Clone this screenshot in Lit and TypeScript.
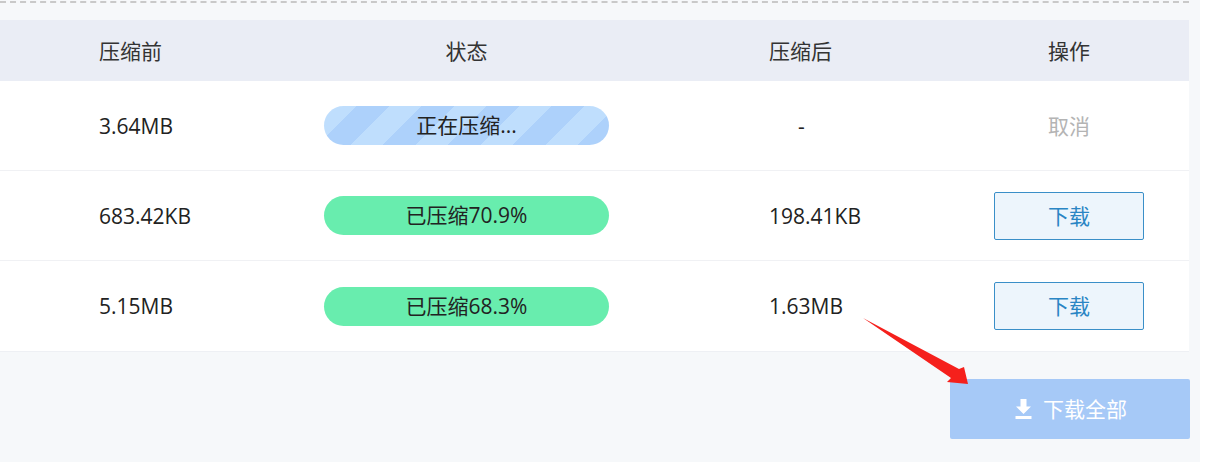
import { LitElement, html, css } from "lit";
import { customElement } from "lit/decorators.js";

const rows = [
  { before: "3.64MB", status: "正在压缩...", busy: true, after: "-", action: "cancel" },
  { before: "683.42KB", status: "已压缩70.9%", busy: false, after: "198.41KB", action: "download" },
  { before: "5.15MB", status: "已压缩68.3%", busy: false, after: "1.63MB", action: "download" },
];

@customElement("app-root")
export class AppRoot extends LitElement {
  static styles = css`
    :host {
      display: block;
      width: 1229px;
      height: 462px;
      overflow: hidden;
      position: relative;
      background: #ffffff;
      font-family: "Open Sans", "Noto Sans CJK SC", sans-serif;
      font-weight: 400;
      font-size: 21px;
      line-height: 30px;
      color: #222;
    }
    .page {
      width: 1200px;
      height: 462px;
      box-sizing: border-box;
      padding-top: 1px;
      background: #f6f8fa;
    }
    .dash {
      width: 1189px;
      border-top: 2px dashed #c9c9c9;
      height: 17px;
    }
    .table { width: 1189px; background: #fff; border-bottom: 1px solid #eef0f4; }
    .row {
      display: grid;
      grid-template-columns: 225px 285px 160px 225px 150px;
      padding-left: 99px;
      padding-right: 45px;
      align-items: center;
    }
    .head { height: 61px; background: #eaedf5; color: #333; }
    .body-row { height: 90px; box-sizing: border-box; position: relative; }
    .body-row.line { border-bottom: 1px solid #f0f1f4; }
    .c { text-align: center; }
    .pill {
      height: 39px;
      line-height: 39px;
      border-radius: 20px;
      text-align: center;
      background: #68edae;
    }
    .pill.busy {
      background: repeating-linear-gradient(135deg, #bfdefd 0 23px, #add1fb 23px 46px);
    }
    .dl {
      height: 48px;
      box-sizing: border-box;
      border: 1px solid #3a8fc8;
      border-radius: 2px;
      background: #edf5fc;
      color: #2a85c4;
      font: inherit;
      padding: 0;
      width: 150px;
    }
    .cancel { color: #b4b4b4; text-align: center; }
    .none { padding-left: 29px; }
    .foot { display: flex; justify-content: flex-end; width: 1190px; padding-top: 27px; }
    .all {
      width: 240px;
      height: 60px;
      border: 0;
      border-radius: 2px;
      background: #a6c9f7;
      color: #fff;
      font: inherit;
      display: flex;
      align-items: center;
      justify-content: center;
      gap: 11px;
      padding: 0 7px 0 9px;
    }
    .all svg { width: 17px; height: 20px; }
    .arrow { position: absolute; left: 859px; top: 315px; width: 112px; height: 72px; }
  `;

  render() {
    return html`
      <div class="page">
        <div class="dash"></div>
        <div class="table">
          <div class="row head">
            <div>压缩前</div>
            <div class="c">状态</div>
            <div></div>
            <div>压缩后</div>
            <div class="c">操作</div>
          </div>
          ${rows.map(
            (r, i) => html`
              <div class="row body-row ${i < 2 ? "line" : ""}">
                <div>${r.before}</div>
                <div class="pill ${r.busy ? "busy" : ""}">${r.status}</div>
                <div></div>
                <div class="${r.after === "-" ? "none" : ""}">${r.after}</div>
                ${r.action === "cancel"
                  ? html`<div class="cancel">取消</div>`
                  : html`<button class="dl">下载</button>`}
              </div>
            `
          )}
        </div>
        <div class="foot">
          <button class="all">
            <svg viewBox="0 0 17 20"><path fill="#fff" d="M5.5 0h6v7.5H16L8.5 15 1 7.5h4.5zM0.5 17h16v3H0.5z" /></svg>
            <span>下载全部</span>
          </button>
        </div>
      </div>
      <svg class="arrow" viewBox="0 0 112 72">
        <path fill="#f5201c" d="M4 3 L100 54 L105 52 L109 69 L88 67 L92 63 Z" />
      </svg>
    `;
  }
}
